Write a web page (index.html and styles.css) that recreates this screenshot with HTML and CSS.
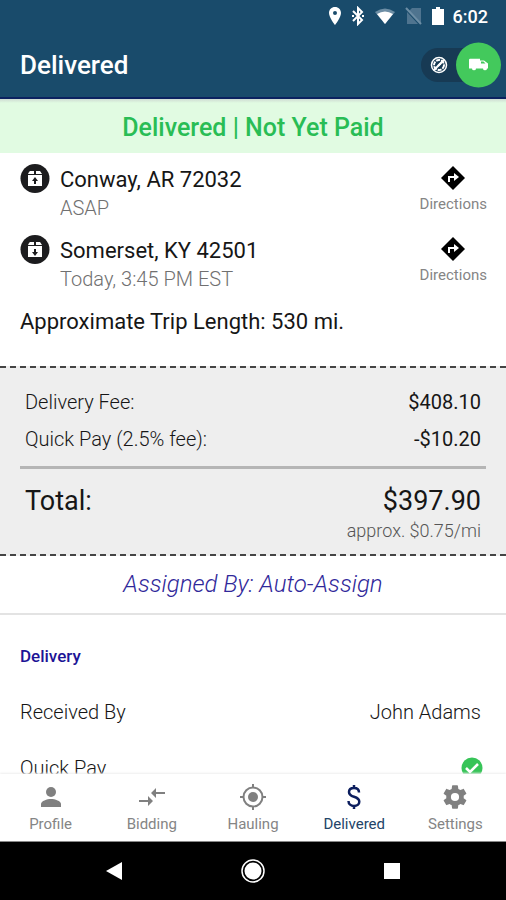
FILE: index.html
```html
<!DOCTYPE html>
<html lang="en">
<head>
<meta charset="utf-8">
<meta name="viewport" content="width=device-width, initial-scale=1">
<title>Delivered</title>
<link rel="stylesheet" href="styles.css">
</head>
<body>
<header class="header">
  <div class="status">
    <svg width="14" height="20" viewBox="0 0 14 20"><path fill="#fff" fill-rule="evenodd" d="M7 1C3.500 1 1 3.600 1 7c0 4.500 6 12 6 12s6-7.500 6-12c0-3.400-2.500-6-6-6zm0 4a2 2 0 1 1 0 4 2 2 0 0 1 0-4z"/></svg>
    <svg width="14" height="20" viewBox="0 0 14 20"><path fill="none" stroke="#fff" stroke-width="2" d="M2 5l9 9-4 4V2l4 4-9 9"/><path fill="#fff" d="M1 9h2v2H1zM11 9h2v2h-2z"/></svg>
    <svg width="22" height="18" viewBox="0 0 22 18"><path fill="#6d8ea5" d="M1 5Q11-2 21 5L11 17z"/><path fill="#fff" d="M3 7q8-5 16 0l-8 10z"/></svg>
    <svg width="18" height="18" viewBox="0 0 18 18"><path fill="#4f748f" d="M7 1h9v15L4 4zM2 5l11 12H2z"/><path stroke="#6d8ea5" stroke-width="2" d="M1 1l15 16"/></svg>
    <svg width="12" height="18" viewBox="0 0 12 18"><path fill="#fff" d="M4 0h4v2h4v16H0V2h4z"/></svg>
    <span class="clock">6:02</span>
  </div>
  <div class="appbar">
    <h1>Delivered</h1>
    <label class="toggle">
      <input type="checkbox" role="switch" aria-label="Available for hauling" checked>
      <svg width="18" height="18" viewBox="0 0 18 18" fill="none" stroke="#fff"><circle cx="9" cy="9" r="7.500" stroke-width="1.500"/><circle cx="9" cy="9" r="5" stroke-width="2" stroke-dasharray="4 1"/><path stroke-width="2" d="M4 14L14 4"/><path stroke-width="2" d="M8 10l3-3"/></svg>
      <span class="knob">
        <svg width="20" height="12" viewBox="0 0 20 12"><path fill="#fff" d="M1 0h10v2h4l4 3v5h-1a2 2 0 0 1-4 0H7a2 2 0 0 1-4 0H0V1z"/><path fill="#43c95c" d="M12 3h2.500l2 2H12z"/></svg>
      </span>
    </label>
  </div>
</header>

<main class="content">
  <p class="banner">Delivered | Not Yet Paid</p>

  <section class="route">
    <div class="stop">
      <svg width="30" height="30" viewBox="0 0 30 30"><circle cx="15" cy="14.500" r="14.500" fill="#1c1c1e"/><path fill="#fff" d="M9 8l1-1h4v3H8zM16 7h4l2 3h-6zM8 11h14v11H8z"/><path fill="none" stroke="#1c1c1e" stroke-width="2" d="M15 20v-5"/><path fill="#1c1c1e" d="M12 17l3-4 3 4z"/></svg>
      <div class="place"><h2>Conway, AR 72032</h2><p>ASAP</p></div>
      <a class="directions" href="#conway"><svg width="26" height="26" viewBox="0 0 26 26"><path d="M13 1l12 12-12 12L1 13z"/><path fill="none" stroke="#fff" stroke-width="2" d="M9 17v-5h6"/><path fill="#fff" d="M14 8l5 4-5 4z"/></svg><span>Directions</span></a>
    </div>
    <div class="stop">
      <svg width="30" height="30" viewBox="0 0 30 30"><circle cx="15" cy="14.500" r="14.500" fill="#1c1c1e"/><path fill="#fff" d="M9 8l1-1h4v3H8zM16 7h4l2 3h-6zM8 11h14v11H8z"/><path fill="none" stroke="#1c1c1e" stroke-width="2" d="M15 14v5"/><path fill="#1c1c1e" d="M12 17l3 4 3-4z"/></svg>
      <div class="place"><h2>Somerset, KY 42501</h2><p>Today, 3:45 PM EST</p></div>
      <a class="directions" href="#somerset"><svg width="26" height="26" viewBox="0 0 26 26"><path d="M13 1l12 12-12 12L1 13z"/><path fill="none" stroke="#fff" stroke-width="2" d="M9 17v-5h6"/><path fill="#fff" d="M14 8l5 4-5 4z"/></svg><span>Directions</span></a>
    </div>
    <p class="length">Approximate Trip Length: 530 mi.</p>
  </section>

  <section class="fees">
    <dl class="lines">
      <div class="line"><dt>Delivery Fee:</dt><dd>$408.10</dd></div>
      <div class="line"><dt>Quick Pay (2.5% fee):</dt><dd>-$10.20</dd></div>
    </dl>
    <dl class="total">
      <div class="line"><dt>Total:</dt><dd>$397.90</dd></div>
    </dl>
    <p class="rate">approx. $0.75/mi</p>
  </section>

  <p class="assigned">Assigned By: Auto-Assign</p>

  <section class="delivery">
    <h3>Delivery</h3>
    <dl>
      <div class="detail"><dt>Received By</dt><dd>John Adams</dd></div>
      <div class="detail"><dt>Quick Pay</dt><dd class="check"><svg role="img" aria-label="Yes" width="22" height="22" viewBox="0 0 22 22"><circle cx="11" cy="11" r="10.500" fill="#37c458"/><path fill="none" stroke="#fff" stroke-width="2.500" d="M5 11l4 4 8-8"/></svg></dd></div>
    </dl>
  </section>
</main>

<nav class="tabs">
  <a href="#profile"><svg width="28" height="28" viewBox="0 0 28 28" fill="#808080"><circle cx="14" cy="9" r="5"/><path d="M4 24v-3c0-3 6-5 10-5s10 2 10 5v3z"/></svg><span>Profile</span></a>
  <a href="#bidding"><svg width="28" height="28" viewBox="0 0 28 28" fill="#808080"><path d="M18 5v4h9v2h-9v4l-5-5zM10 13l5 5-5 5v-4H1v-2h9z"/></svg><span>Bidding</span></a>
  <a href="#hauling"><svg width="28" height="28" viewBox="0 0 28 28"><circle cx="14" cy="14" r="9.500" fill="none" stroke="#808080" stroke-width="2"/><circle cx="14" cy="14" r="5" fill="#808080"/><path stroke="#808080" stroke-width="2" d="M14 1v4M14 23v4M1 14h4M23 14h4"/></svg><span>Hauling</span></a>
  <a class="active" href="#delivered" aria-current="page"><svg width="28" height="28" viewBox="0 0 28 28" fill="none" stroke="#0c1e5e" stroke-width="2.500"><path d="M19 9.500c0-3-2-4.500-5-4.500S9 6.500 9 9c0 3 2.500 4 5 4.800s5.300 1.800 5.300 4.900c0 2.600-2.300 4.300-5.300 4.300s-5.500-1.900-5.500-5M14 2v3M14 23v3"/></svg><span>Delivered</span></a>
  <a href="#settings"><svg width="28" height="28" viewBox="0 0 24 24" fill="#808080"><path d="M19.430 12.980c.040-.320.070-.640.070-.980s-.030-.660-.070-.980l2.110-1.650c.190-.150.240-.420.120-.640l-2-3.460c-.120-.220-.390-.300-.610-.220l-2.490 1c-.520-.400-1.080-.730-1.690-.980l-.380-2.650A.488.488 0 0 0 14 2h-4c-.250 0-.460.180-.490.420l-.380 2.650c-.610.250-1.170.590-1.690.980l-2.490-1c-.230-.090-.490 0-.610.220l-2 3.460c-.130.220-.070.490.120.640l2.110 1.650c-.040.320-.070.650-.070.980s.030.660.070.980l-2.110 1.650c-.190.150-.240.420-.120.640l2 3.460c.120.220.390.300.610.220l2.490-1c.520.400 1.080.730 1.690.980l.380 2.650c.030.240.240.420.490.420h4c.250 0 .460-.180.490-.420l.380-2.650c.610-.250 1.170-.590 1.690-.980l2.490 1c.230.090.490 0 .610-.220l2-3.460c.120-.220.070-.490-.120-.640zM12 15.500a3.500 3.500 0 1 1 0-7 3.500 3.500 0 0 1 0 7z"/></svg><span>Settings</span></a>
</nav>

<div class="system">
  <button type="button" aria-label="Back"><svg width="24" height="24" viewBox="0 0 24 24"><path fill="#fff" d="M19 3v18L3 12z"/></svg></button>
  <button type="button" aria-label="Home"><svg width="24" height="24" viewBox="0 0 24 24"><circle cx="12" cy="12" r="11" fill="none" stroke="#fff" stroke-width="1.500"/><circle cx="12" cy="12" r="8.500" fill="#fff"/></svg></button>
  <button type="button" aria-label="Overview"><svg width="24" height="24" viewBox="0 0 24 24"><path fill="#fff" d="M5 4h16v16H5z"/></svg></button>
</div>
</body>
</html>
```
FILE: styles.css
```css
* {
  box-sizing: border-box;
  margin: 0;
  padding: 0;
}

body {
  display: flex;
  flex-direction: column;
  height: 100vh;
  background: #fff;
  color: #161616;
  font-family: Roboto, "Liberation Sans", sans-serif;
  font-size: 20px;
}

svg {
  display: block;
  flex: none;
}

a {
  color: inherit;
  text-decoration: none;
}

.header {
  flex: none;
  background: #194b6b;
  border-bottom: 2px solid #0b2260;
  color: #fff;
}

.status {
  display: flex;
  align-items: center;
  justify-content: flex-end;
  gap: 9px;
  height: 32px;
  padding-right: 18px;
}

.clock {
  font-size: 18px;
  font-weight: 500;
}

.appbar {
  display: flex;
  align-items: center;
  justify-content: space-between;
  height: 65px;
  padding: 0 5px 0 20px;
}

.appbar h1 {
  font-size: 26px;
  font-weight: 500;
}

.toggle {
  position: relative;
  display: flex;
  align-items: center;
  width: 80px;
  height: 34px;
  padding-left: 9px;
  border-radius: 17px;
  background: #173a54;
}

.toggle input {
  position: absolute;
  inset: 0;
  appearance: none;
}

.knob {
  position: absolute;
  top: 50%;
  right: 0;
  display: grid;
  place-items: center;
  width: 45px;
  height: 45px;
  border-radius: 50%;
  background: #43c95c;
  transform: translateY(-50%);
}

.content {
  flex: 1;
  min-height: 0;
  overflow: hidden;
}

.banner {
  padding-top: 4px;
  background: linear-gradient(#cfdcd3, #e1fbe2 4px);
  color: #29bd55;
  font-size: 25px;
  font-weight: 500;
  line-height: 50px;
  text-align: center;
}

.route {
  padding: 11px 19px 30px 20px;
}

.stop {
  display: flex;
  gap: 10px;
  margin-bottom: 13px;
}

.place {
  flex: 1;
  padding-top: 2px;
}

.place h2,
.length {
  font-size: 22px;
  font-weight: 400;
  line-height: 28px;
}

.length {
  padding-top: 2px;
}

.place p {
  color: #707070;
  font-weight: 300;
  line-height: 28px;
}

.directions {
  display: flex;
  flex-direction: column;
  align-items: center;
  padding-top: 1px;
  color: #858585;
  font-size: 15px;
  line-height: 26px;
}

.fees {
  padding: 16px 20px 12px;
  border: dashed #444;
  border-width: 2px 0;
  background: #eee;
}

.lines {
  border-bottom: 3px solid #b5b5b5;
  padding-bottom: 8px;
}

.line {
  display: flex;
  justify-content: space-between;
  padding: 0 5px;
  line-height: 37px;
}

.lines dt {
  font-weight: 300;
}

.total {
  padding-top: 14px;
  font-size: 27px;
}

.rate {
  padding-right: 5px;
  color: #555;
  font-size: 18px;
  font-weight: 300;
  line-height: 22px;
  text-align: right;
}

.assigned {
  border-bottom: 2px solid #e3e3e3;
  color: #30289a;
  font-size: 24px;
  font-style: italic;
  font-weight: 300;
  line-height: 57px;
  text-align: center;
}

.delivery {
  padding: 27px 20px 0;
}

.delivery h3 {
  color: #1d1496;
  font-size: 17px;
  font-weight: 500;
  line-height: 28px;
}

.detail {
  display: flex;
  justify-content: space-between;
  padding-right: 5px;
  font-weight: 300;
  line-height: 56px;
}

.delivery dl {
  padding-top: 14px;
}

.check {
  display: flex;
  align-items: center;
  margin-right: -2px;
}

.tabs {
  display: flex;
  flex: none;
  height: 68px;
  padding-top: 9px;
  border-bottom: 1px solid #888;
  box-shadow: 0 -1px 2px #eee;
  background: #fff;
  color: #858585;
  font-size: 15px;
}

.tabs a {
  display: flex;
  flex: 1;
  flex-direction: column;
  align-items: center;
  line-height: 26px;
}

.tabs .active {
  color: #234468;
}

.system {
  display: flex;
  flex: none;
  height: 58px;
  padding: 0 9%;
  background: #000;
}

.system button {
  display: grid;
  flex: 1;
  place-items: center;
  border: 0;
  background: none;
}
```
